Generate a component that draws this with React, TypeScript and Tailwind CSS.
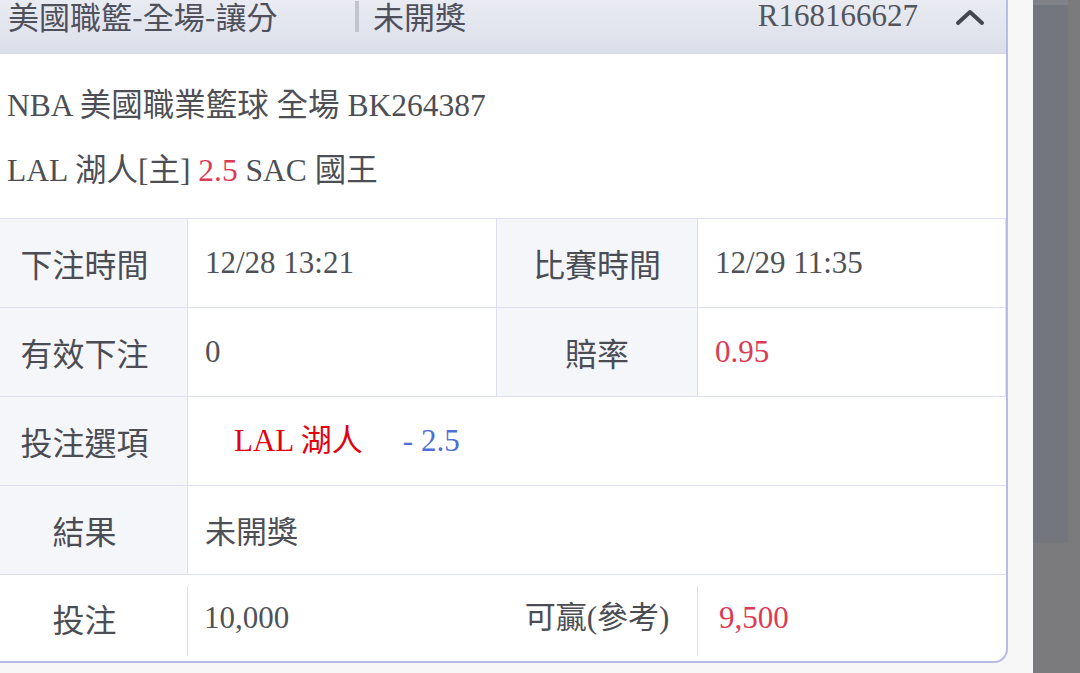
import { ReactNode } from 'react';

const serif = 'font-["Liberation_Serif","Noto_Sans_CJK_TC",serif]';
const sans = 'font-["Noto_Sans_CJK_TC","Noto_Sans",sans-serif]';

function Label({ children, white = false }: { children: ReactNode; white?: boolean }) {
  return (
    <div
      className={`flex items-center justify-center border-r border-[#dde0f0] text-[32px] text-[#4b4d55] ${sans} ${
        white ? 'bg-white' : 'bg-[#f5f6fa]'
      }`}
    >
      {children}
    </div>
  );
}

function Value({ children, red = false }: { children: ReactNode; red?: boolean }) {
  return (
    <div
      className={`flex items-center border-r border-[#dde0f0] pl-[17px] text-[31px] ${serif} ${
        red ? 'text-[#dc3b55]' : 'text-[#505258]'
      }`}
    >
      {children}
    </div>
  );
}

export default function App() {
  return (
    <div className="flex h-[673px] w-[1080px] overflow-hidden bg-[#f4f4f6]">
      <div className="w-[1033px] shrink-0 overflow-hidden bg-[#f7f7f8]">
        {/* Order card */}
        <div className="-ml-[18px] -mt-[20px] w-[1026px] overflow-hidden rounded-br-[14px] border-r-2 border-b-2 border-[#b9bce3] bg-white">
          {/* Header */}
          <div className="flex h-[74px] items-center border-b border-[#d6d9e6] bg-gradient-to-b from-[#eff0f6] to-[#dcdfea] pl-[26px] pr-[21px] text-[#4e515c]">
            <span className={`w-[347px] text-[31px] ${sans}`}>美國職籃-全場-讓分</span>
            <span className="h-[31px] w-[4px] bg-[#c3c5cc]" />
            <span className={`ml-[14px] text-[31px] ${sans}`}>未開獎</span>
            <span className={`ml-auto text-[31px] text-[#53555d] ${serif}`}>R168166627</span>
            <svg className="ml-[37px]" width="30" height="18" viewBox="0 0 30 18">
              <polyline points="3,15 15,4 27,15" fill="none" stroke="#45474f" strokeWidth="4" strokeLinecap="round" strokeLinejoin="round" />
            </svg>
          </div>

          {/* Match info */}
          <div className={`px-[25px] pt-[19px] pb-[15px] text-[31.5px] leading-[65px] text-[#4d4f55] ${serif}`}>
            <div>NBA 美國職業籃球 全場 BK264387</div>
            <div>
              LAL 湖人[主] <span className="text-[#dc3b55]">2.5</span> SAC 國王
            </div>
          </div>

          {/* Detail table */}
          <div className="border-t border-[#dde0f0]">
            <div className="grid h-[89px] grid-cols-[206px_309px_201px_1fr] border-b border-[#dde0f0]">
              <Label>下注時間</Label>
              <Value>12/28 13:21</Value>
              <Label>比賽時間</Label>
              <Value>12/29 11:35</Value>
            </div>
            <div className="grid h-[89px] grid-cols-[206px_309px_201px_1fr] border-b border-[#dde0f0]">
              <Label>有效下注</Label>
              <Value>0</Value>
              <Label>賠率</Label>
              <Value red>0.95</Value>
            </div>
            <div className="grid h-[89px] grid-cols-[206px_1fr] border-b border-[#dde0f0]">
              <Label>投注選項</Label>
              <div className={`flex items-center pl-[46px] text-[31px] ${serif}`}>
                <span className="text-[#e3000f]">LAL 湖人</span>
                <span className="ml-[40px] text-[#4f6fd6]">- 2.5</span>
              </div>
            </div>
            <div className="grid h-[89px] grid-cols-[206px_1fr] border-b border-[#dde0f0]">
              <Label>結果</Label>
              <div className={`flex items-center pl-[17px] text-[31px] text-[#4d4f55] ${sans}`}>未開獎</div>
            </div>
            <div className="flex h-[86px] items-center">
              <div className={`flex w-[205px] justify-center text-[32px] text-[#4b4d55] ${sans}`}>投注</div>
              <div className="mt-[11px] mb-[5px] w-px self-stretch bg-[#dde0f0]" />
              <div className={`w-[309px] pl-[16px] text-[31px] text-[#505258] ${serif}`}>10,000</div>
              <div className={`flex w-[200px] justify-center text-[31px] text-[#4b4d55] ${serif}`}>可贏(參考)</div>
              <div className="mt-[11px] mb-[5px] w-px self-stretch bg-[#dde0f0]" />
              <div className={`pl-[21px] text-[31px] text-[#dc3b55] ${serif}`}>9,500</div>
            </div>
          </div>
        </div>
      </div>

      {/* Side strip */}
      <div className="flex w-[47px] flex-col bg-[#7b7b7d]">
        <div className="h-[543px] w-[35px] border-t-[5px] border-[#808288] bg-[#74767e]" />
      </div>
    </div>
  );
}
